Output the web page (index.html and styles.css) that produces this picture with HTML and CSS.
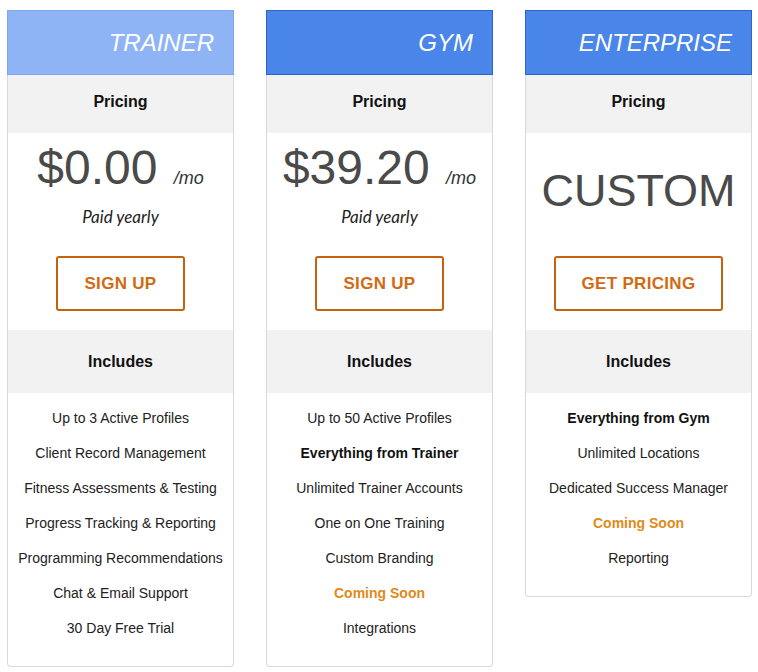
FILE: index.html
```html
<!DOCTYPE html>
<html>
<head>
<meta charset="utf-8">
<link rel="stylesheet" href="styles.css">
</head>
<body>
<div class="plans">
  <div class="card">
    <div class="head head-light">TRAINER</div>
    <div class="band band-pricing">Pricing</div>
    <div class="price-area">
      <div class="price">$0.00 <span class="per">/mo</span></div>
      <div class="paid">Paid yearly</div>
      <a class="btn">SIGN UP</a>
    </div>
    <div class="band band-includes">Includes</div>
    <ul class="features">
      <li>Up to 3 Active Profiles</li>
      <li>Client Record Management</li>
      <li>Fitness Assessments &amp; Testing</li>
      <li>Progress Tracking &amp; Reporting</li>
      <li>Programming Recommendations</li>
      <li>Chat &amp; Email Support</li>
      <li>30 Day Free Trial</li>
    </ul>
  </div>
  <div class="card">
    <div class="head">GYM</div>
    <div class="band band-pricing">Pricing</div>
    <div class="price-area">
      <div class="price">$39.20 <span class="per">/mo</span></div>
      <div class="paid">Paid yearly</div>
      <a class="btn">SIGN UP</a>
    </div>
    <div class="band band-includes">Includes</div>
    <ul class="features">
      <li>Up to 50 Active Profiles</li>
      <li class="strong">Everything from Trainer</li>
      <li>Unlimited Trainer Accounts</li>
      <li>One on One Training</li>
      <li>Custom Branding</li>
      <li class="soon">Coming Soon</li>
      <li>Integrations</li>
    </ul>
  </div>
  <div class="card">
    <div class="head">ENTERPRISE</div>
    <div class="band band-pricing">Pricing</div>
    <div class="price-area">
      <div class="custom">CUSTOM</div>
      <a class="btn">GET PRICING</a>
    </div>
    <div class="band band-includes">Includes</div>
    <ul class="features">
      <li class="strong">Everything from Gym</li>
      <li>Unlimited Locations</li>
      <li>Dedicated Success Manager</li>
      <li class="soon">Coming Soon</li>
      <li>Reporting</li>
    </ul>
  </div>
</div>
</body>
</html>
```

FILE: styles.css
```css
* { box-sizing: border-box; }
html, body { margin: 0; background: #fff; }
body {
  padding: 10px 0 10px 7px;
  font-family: "Liberation Sans", Arial, sans-serif;
  color: #222;
}
.plans {
  display: flex;
  align-items: flex-start;
  gap: 32px;
}
.card {
  flex: 0 0 227px;
  width: 227px;
  border: 1px solid #d9d9d9;
  border-top: none;
  border-radius: 0 0 4px 4px;
  background: #fff;
}
.head {
  margin: 0 -1px;
  height: 65px;
  background: #4a85e9;
  border: 1px solid #2c64cf;
  display: flex;
  align-items: center;
  justify-content: flex-end;
  padding: 0 19px 0 0;
  color: #fff;
  font-style: italic;
  font-size: 24px;
}
.head-light {
  background: #8fb4f6;
  border-color: #7ea6ee;
}
.band {
  background: #f2f2f2;
  text-align: center;
  font-weight: bold;
  font-size: 16px;
  line-height: 20px;
  color: #111;
}
.band-pricing { height: 58px; padding-top: 17px; }
.band-includes { height: 63px; padding-top: 22px; }
.price-area {
  display: flex;
  flex-direction: column;
  align-items: center;
  padding: 10px 0 19px;
}
.price {
  height: 50px;
  line-height: 50px;
  font-size: 48px;
  color: #4a4a4a;
  white-space: nowrap;
}
.per {
  font-size: 18px;
  font-style: italic;
  color: #333;
  margin-left: 3px;
}
.paid {
  margin-top: 12px;
  line-height: 24px;
  font-family: Lato, "Liberation Sans", sans-serif;
  font-style: italic;
  font-size: 17px;
  color: #222;
}
.custom {
  margin: 23px 0 40px;
  line-height: 50px;
  font-size: 45px;
  color: #4a4a4a;
}
.btn {
  display: flex;
  align-items: center;
  justify-content: center;
  height: 55px;
  padding: 0 26px;
  border: 2px solid #c4620e;
  border-radius: 3px;
  color: #d06b14;
  font-weight: bold;
  font-size: 17px;
  letter-spacing: 0.3px;
}
.price-area .paid + .btn { margin-top: 27px; }
.features {
  list-style: none;
  margin: 0;
  padding: 8px 0 20px;
  text-align: center;
  font-size: 14px;
  line-height: 35px;
  color: #222;
}
.features .strong { font-weight: bold; color: #111; }
.features .soon { font-weight: bold; color: #de8a1a; }
```
